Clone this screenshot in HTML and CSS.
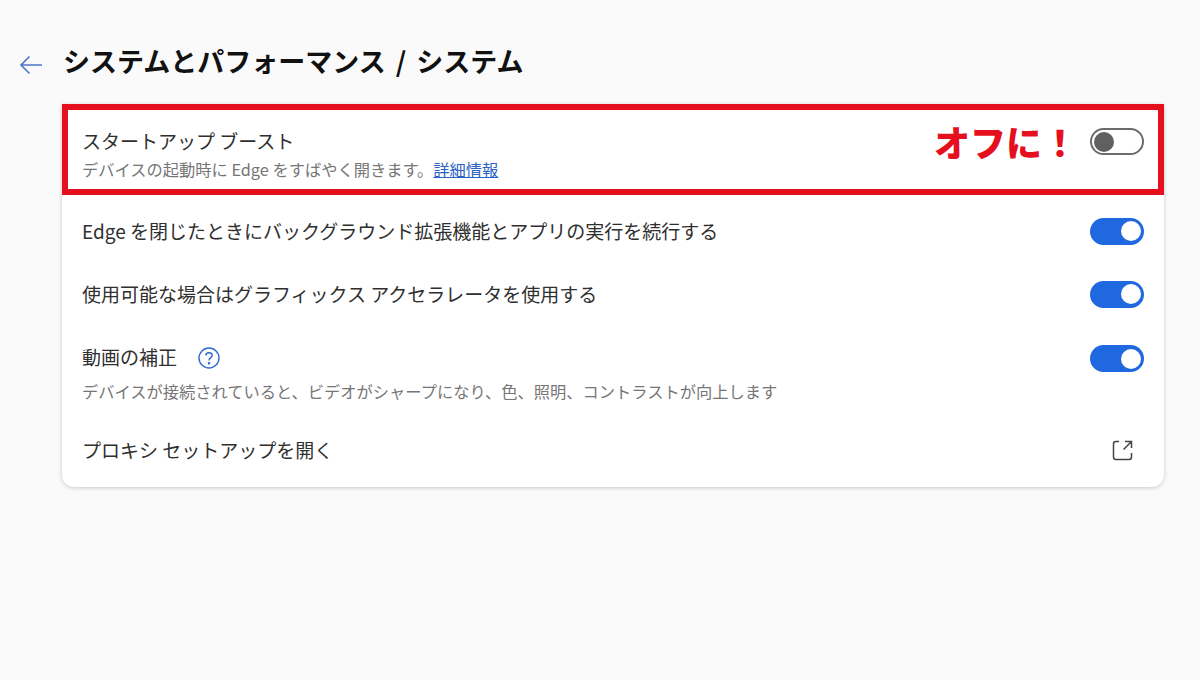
FILE: index.html
```html
<!DOCTYPE html>
<html lang="ja">
    <head>
        <meta charset="utf-8" />
        <title>システム</title>
        <link rel="stylesheet" href="styles.css">
    </head>
    <body>
        <div class="page">
            <div class="header">
                <svg class="back" width="26" height="22" viewBox="0 0 26 22" fill="none" stroke="#4a76c9" stroke-width="1.6">
                    <path d="M24 11H3M11.5 2.5L3 11L11.5 19.5"/>
                </svg>
                <h1 class="title">システムとパフォーマンス / システム</h1>
            </div>
            <div class="card">
                <div class="row row--boost">
                    <div class="row__text">
                        <div class="row__label">スタートアップ ブースト</div>
                        <div class="row__sub row__sub--tight">デバイスの起動時に Edge をすばやく開きます。<a class="link" href="#">詳細情報</a></div>
                    </div>
                    <span class="note">オフに！</span>
                    <span class="toggle toggle--off"></span>
                </div>
                <div class="row row--edge">
                    <div class="row__label">Edge を閉じたときにバックグラウンド拡張機能とアプリの実行を続行する</div>
                    <span class="toggle"></span>
                </div>
                <div class="row row--gpu">
                    <div class="row__label">使用可能な場合はグラフィックス アクセラレータを使用する</div>
                    <span class="toggle"></span>
                </div>
                <div class="row row--video">
                    <div class="row__text">
                        <div class="row__label row__label--help">動画の補正
                            <svg class="help" width="22" height="22" viewBox="0 0 22 22" fill="none" stroke="#2f6ad0" stroke-width="1.4">
                                <circle cx="11" cy="11" r="10"/>
                                <path d="M7.8 8.6C7.8 6.8 9.2 5.7 11 5.7C12.8 5.7 14.2 6.8 14.2 8.4C14.2 10.6 11 10.7 11 13.4"/>
                                <circle cx="11" cy="16.2" r="0.6" fill="#2f6ad0"/>
                            </svg>
                        </div>
                        <div class="row__sub">デバイスが接続されていると、ビデオがシャープになり、色、照明、コントラストが向上します</div>
                    </div>
                    <span class="toggle"></span>
                </div>
                <div class="row row--proxy">
                    <div class="row__label">プロキシ セットアップを開く</div>
                    <svg class="open" width="22" height="22" viewBox="0 0 22 22" fill="none" stroke="#444" stroke-width="1.5">
                        <path d="M7 2.5H4C2.6 2.5 1.5 3.6 1.5 5V18C1.5 19.4 2.6 20.5 4 20.5H17C18.4 20.5 19.5 19.4 19.5 18V14"/>
                        <path d="M11.5 10.5L19 3M13 2.5H19.5V9"/>
                    </svg>
                </div>
                <div class="highlight"></div>
            </div>
        </div>
    </body>
</html>
```

FILE: styles.css
```css
*,*::before,*::after{
    box-sizing: border-box;
}
body{
    margin:0;
    background:#fafafa;
    font-family:"Noto Sans CJK JP","Noto Sans",sans-serif;
    color:#2f2f2f;
}
.page{
    width:1200px;
    height:680px;
    padding:41px 36px 0 18px;
    overflow:hidden;
}
.header{
    display:flex;
    align-items:center;
    height:44px;
    margin-bottom:19px;
}
.back{
    flex-shrink:0;
    margin-right:19px;
    margin-top:4px;
}
.title{
    margin:0 0 6px;
    font-size:27px;
    font-weight:700;
    word-spacing:4px;
    color:#111;
    white-space:nowrap;
}
.card{
    position:relative;
    margin-left:44px;
    height:383px;
    background:#fff;
    border-radius:0 0 12px 12px;
    box-shadow:0 1px 4px rgba(0,0,0,0.2);
}
.row{
    display:flex;
    align-items:center;
    padding:0 20px;
}
.row--boost{
    height:96px;
    align-items:flex-start;
    padding-top:24px;
}
.row--edge{
    height:62px;
}
.row--gpu{
    height:64px;
}
.row--video{
    height:94px;
    align-items:flex-start;
    padding-top:18px;
}
.row--proxy{
    height:67px;
    padding-bottom:7px;
}
.row__text{
    flex:1;
}
.row__label{
    flex:1;
    font-size:19px;
    line-height:26px;
    white-space:nowrap;
}
.row__label--help{
    display:flex;
    align-items:center;
    gap:21px;
}
.row__sub{
    margin-top:11px;
    font-size:16.25px;
    line-height:20px;
    color:#767676;
    white-space:nowrap;
}
.row__sub--tight{
    margin-top:5px;
}
.help{
    margin-top:2px;
}
.link{
    color:#2a62c4;
}
.note{
    margin-top:-7px;
    margin-right:12px;
    font-size:36px;
    line-height:40px;
    font-weight:900;
    color:#e60f1e;
}
.toggle{
    position:relative;
    flex-shrink:0;
    width:54px;
    height:27px;
    border-radius:14px;
    background:#1f68e0;
}
.toggle::after{
    content:"";
    position:absolute;
    top:3.5px;
    right:3px;
    width:20px;
    height:20px;
    border-radius:50%;
    background:#fff;
}
.toggle--off{
    background:#fff;
    border:2px solid #6b6b6b;
}
.toggle--off::after{
    top:1.5px;
    left:2px;
    right:auto;
    background:#606060;
}
.row--video .toggle{
    margin-top:1px;
}
.open{
    flex-shrink:0;
    margin-right:10px;
}
.highlight{
    position:absolute;
    top:0;
    left:0;
    right:0;
    height:91px;
    border:6px solid #e60f1e;
    pointer-events:none;
}
```
